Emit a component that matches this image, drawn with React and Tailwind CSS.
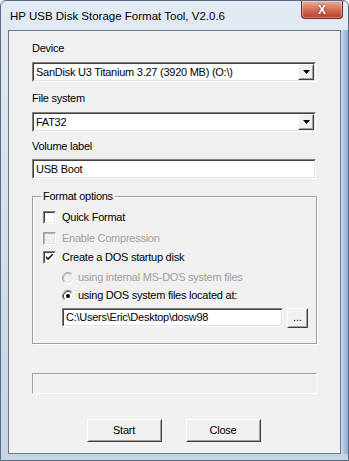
import React from "react";

const font = { fontFamily: '"Liberation Sans", Arial, sans-serif' };

function Sunken({ className = "", children }) {
  return (
    <div className={"border border-t-[#808080] border-l-[#808080] border-r-white border-b-white " + className}>
      <div className="h-full border border-t-[#404040] border-l-[#404040] border-r-[#e3e3e3] border-b-[#e3e3e3] bg-white flex items-center">
        {children}
      </div>
    </div>
  );
}

function Raised({ className = "", children }) {
  return (
    <div className={"border border-t-white border-l-white border-r-[#404040] border-b-[#404040] bg-[#f0f0f0] " + className}>
      <div className="h-full w-full border border-t-[#f0f0f0] border-l-[#f0f0f0] border-r-[#a0a0a0] border-b-[#a0a0a0] flex items-center justify-center">
        {children}
      </div>
    </div>
  );
}

const txt = "text-[11px] leading-none tracking-[-0.25px]";

function Combo({ text }) {
  return (
    <Sunken className="h-[20px] w-[284px]">
      <span className={"flex-1 pl-[2px] text-black " + txt}>{text}</span>
      <Raised className="h-[16px] w-[16px]">
        <svg width="7" height="4" viewBox="0 0 7 4"><path d="M0 0H7L3.5 4Z" fill="#000" /></svg>
      </Raised>
    </Sunken>
  );
}

function Check({ checked, disabled, label }) {
  return (
    <div className="flex items-center h-[13px]">
      <div className={"w-[13px] h-[13px] border border-r-white border-b-white " + (disabled ? "border-t-[#a0a0a0] border-l-[#a0a0a0]" : "border-t-[#808080] border-l-[#808080]")}>
        <div className={"w-full h-full border border-r-[#e3e3e3] border-b-[#e3e3e3] flex items-center justify-center " + (disabled ? "bg-[#f0f0f0] border-t-[#b0b0b0] border-l-[#b0b0b0]" : "bg-white border-t-[#404040] border-l-[#404040]")}>
          {checked && (
            <svg width="7" height="7" viewBox="0 0 7 7"><path d="M0 2L0 4L2 6L7 1L7 -1L2 4Z" fill="#000" /></svg>
          )}
        </div>
      </div>
      <span className={"ml-[6px] " + txt + " " + (disabled ? "text-[#a0a0a0]" : "text-black")}>{label}</span>
    </div>
  );
}

function Radio({ checked, disabled, label }) {
  return (
    <div className="flex items-center h-[13px]">
      <svg width="12" height="12" viewBox="0 0 12 12">
        <circle cx="6" cy="6" r="5" fill={disabled ? "#f0f0f0" : "#fff"} />
        <path d="M2.11 9.89A5.5 5.5 0 0 1 9.89 2.11" stroke={disabled ? "#a8a8a8" : "#808080"} fill="none" />
        <path d="M9.89 2.11A5.5 5.5 0 0 1 2.11 9.89" stroke="#ffffff" fill="none" />
        <path d="M2.82 9.18A4.5 4.5 0 0 1 9.18 2.82" stroke={disabled ? "#b8b8b8" : "#404040"} fill="none" />
        <path d="M9.18 2.82A4.5 4.5 0 0 1 2.82 9.18" stroke="#e3e3e3" fill="none" />
        {checked && <circle cx="6" cy="6" r="2" fill="#000" />}
      </svg>
      <span className={"ml-[4px] " + txt + " " + (disabled ? "text-[#a0a0a0]" : "text-black")}>{label}</span>
    </div>
  );
}

export default function App() {
  return (
    <div style={font} className="w-[349px] h-[461px] bg-gradient-to-b from-[#e2eaf3] to-[#c4d4e6] border border-[#5b6a80] rounded-t-[6px] flex flex-col overflow-hidden">
      <div className="h-[29px] shrink-0 flex items-start justify-between pl-[9px] pr-[5px]">
        <span className="mt-[10px] text-[11.5px] leading-none text-black">HP USB Disk Storage Format Tool, V2.0.6</span>
        <div className="w-[42px] h-[18px] rounded-b-[4px] border border-[#6d2a22] border-t-0 bg-gradient-to-b from-[#eab0a0] via-[#d46f58] to-[#b83a27] flex items-center justify-center shadow-[inset_0_0_0_1px_rgba(255,255,255,0.35)]">
          <span className="text-white text-[12px] font-bold leading-none [text-shadow:0_0_2px_#5a1a10]">X</span>
        </div>
      </div>
      <div className="flex-1 flex mb-[6px]">
        <div className="w-[7px]" />
        <div className="flex-1 border border-[#6f7b8b] bg-[#f0f0f0] flex flex-col pl-[23px]">
          <span className="mt-[11px] leading-[13px] text-black text-[11px] tracking-[-0.25px]">Device</span>
          <div className="mt-[7px]"><Combo text="SanDisk U3 Titanium 3.27 (3920 MB) (O:\)" /></div>
          <span className="mt-[10px] text-[11px] tracking-[-0.25px] leading-[13px] text-black">File system</span>
          <div className="mt-[7px]"><Combo text="FAT32" /></div>
          <span className="mt-[8px] text-[11px] tracking-[-0.25px] leading-[13px] text-black">Volume label</span>
          <div className="mt-[6px]">
            <Sunken className="h-[20px] w-[284px]">
              <span className={"pl-[2px] text-black " + txt}>USB Boot</span>
            </Sunken>
          </div>
          <fieldset className="mt-[11px] w-[285px] h-[154px] border border-[#a0a0a0] shadow-[inset_1px_1px_0_#fff,1px_1px_0_#fff] pl-[10px]">
            <legend className="-ml-[2px] px-[2px] bg-[#f0f0f0] text-[11px] tracking-[-0.25px] leading-[13px] text-black">Format options</legend>
            <div className="mt-[8px] flex flex-col">
              <Check label="Quick Format" />
              <div className="mt-[8px]"><Check disabled label="Enable Compression" /></div>
              <div className="mt-[6px]"><Check checked label="Create a DOS startup disk" /></div>
              <div className="mt-[7px] ml-[19px]"><Radio disabled label="using internal MS-DOS system files" /></div>
              <div className="mt-[5px] ml-[19px]"><Radio checked label="using DOS system files located at:" /></div>
              <div className="mt-[6px] ml-[19px] flex items-start">
                <Sunken className="h-[19px] w-[221px]">
                  <span className={"pl-[2px] text-black " + txt}>C:\Users\Eric\Desktop\dosw98</span>
                </Sunken>
                <Raised className="ml-[4px] h-[20px] w-[21px]">
                  <span className="text-[11px] leading-none text-black -mt-[2px]">...</span>
                </Raised>
              </div>
            </div>
          </fieldset>
          <div className="mt-[29px] w-[285px] h-[21px] border border-t-[#a0a0a0] border-l-[#a0a0a0] border-r-white border-b-white bg-[#f0f0f0]" />
          <div className="mt-[25px] -ml-[23px] flex justify-center gap-[24px] pr-[2px]">
            <Raised className="w-[75px] h-[23px]"><span className={"text-black " + txt}>Start</span></Raised>
            <Raised className="w-[75px] h-[23px]"><span className={"text-black " + txt}>Close</span></Raised>
          </div>
        </div>
        <div className="w-[7px] bg-gradient-to-r from-[#c9daec] to-[#86acd6]" />
      </div>
    </div>
  );
}
